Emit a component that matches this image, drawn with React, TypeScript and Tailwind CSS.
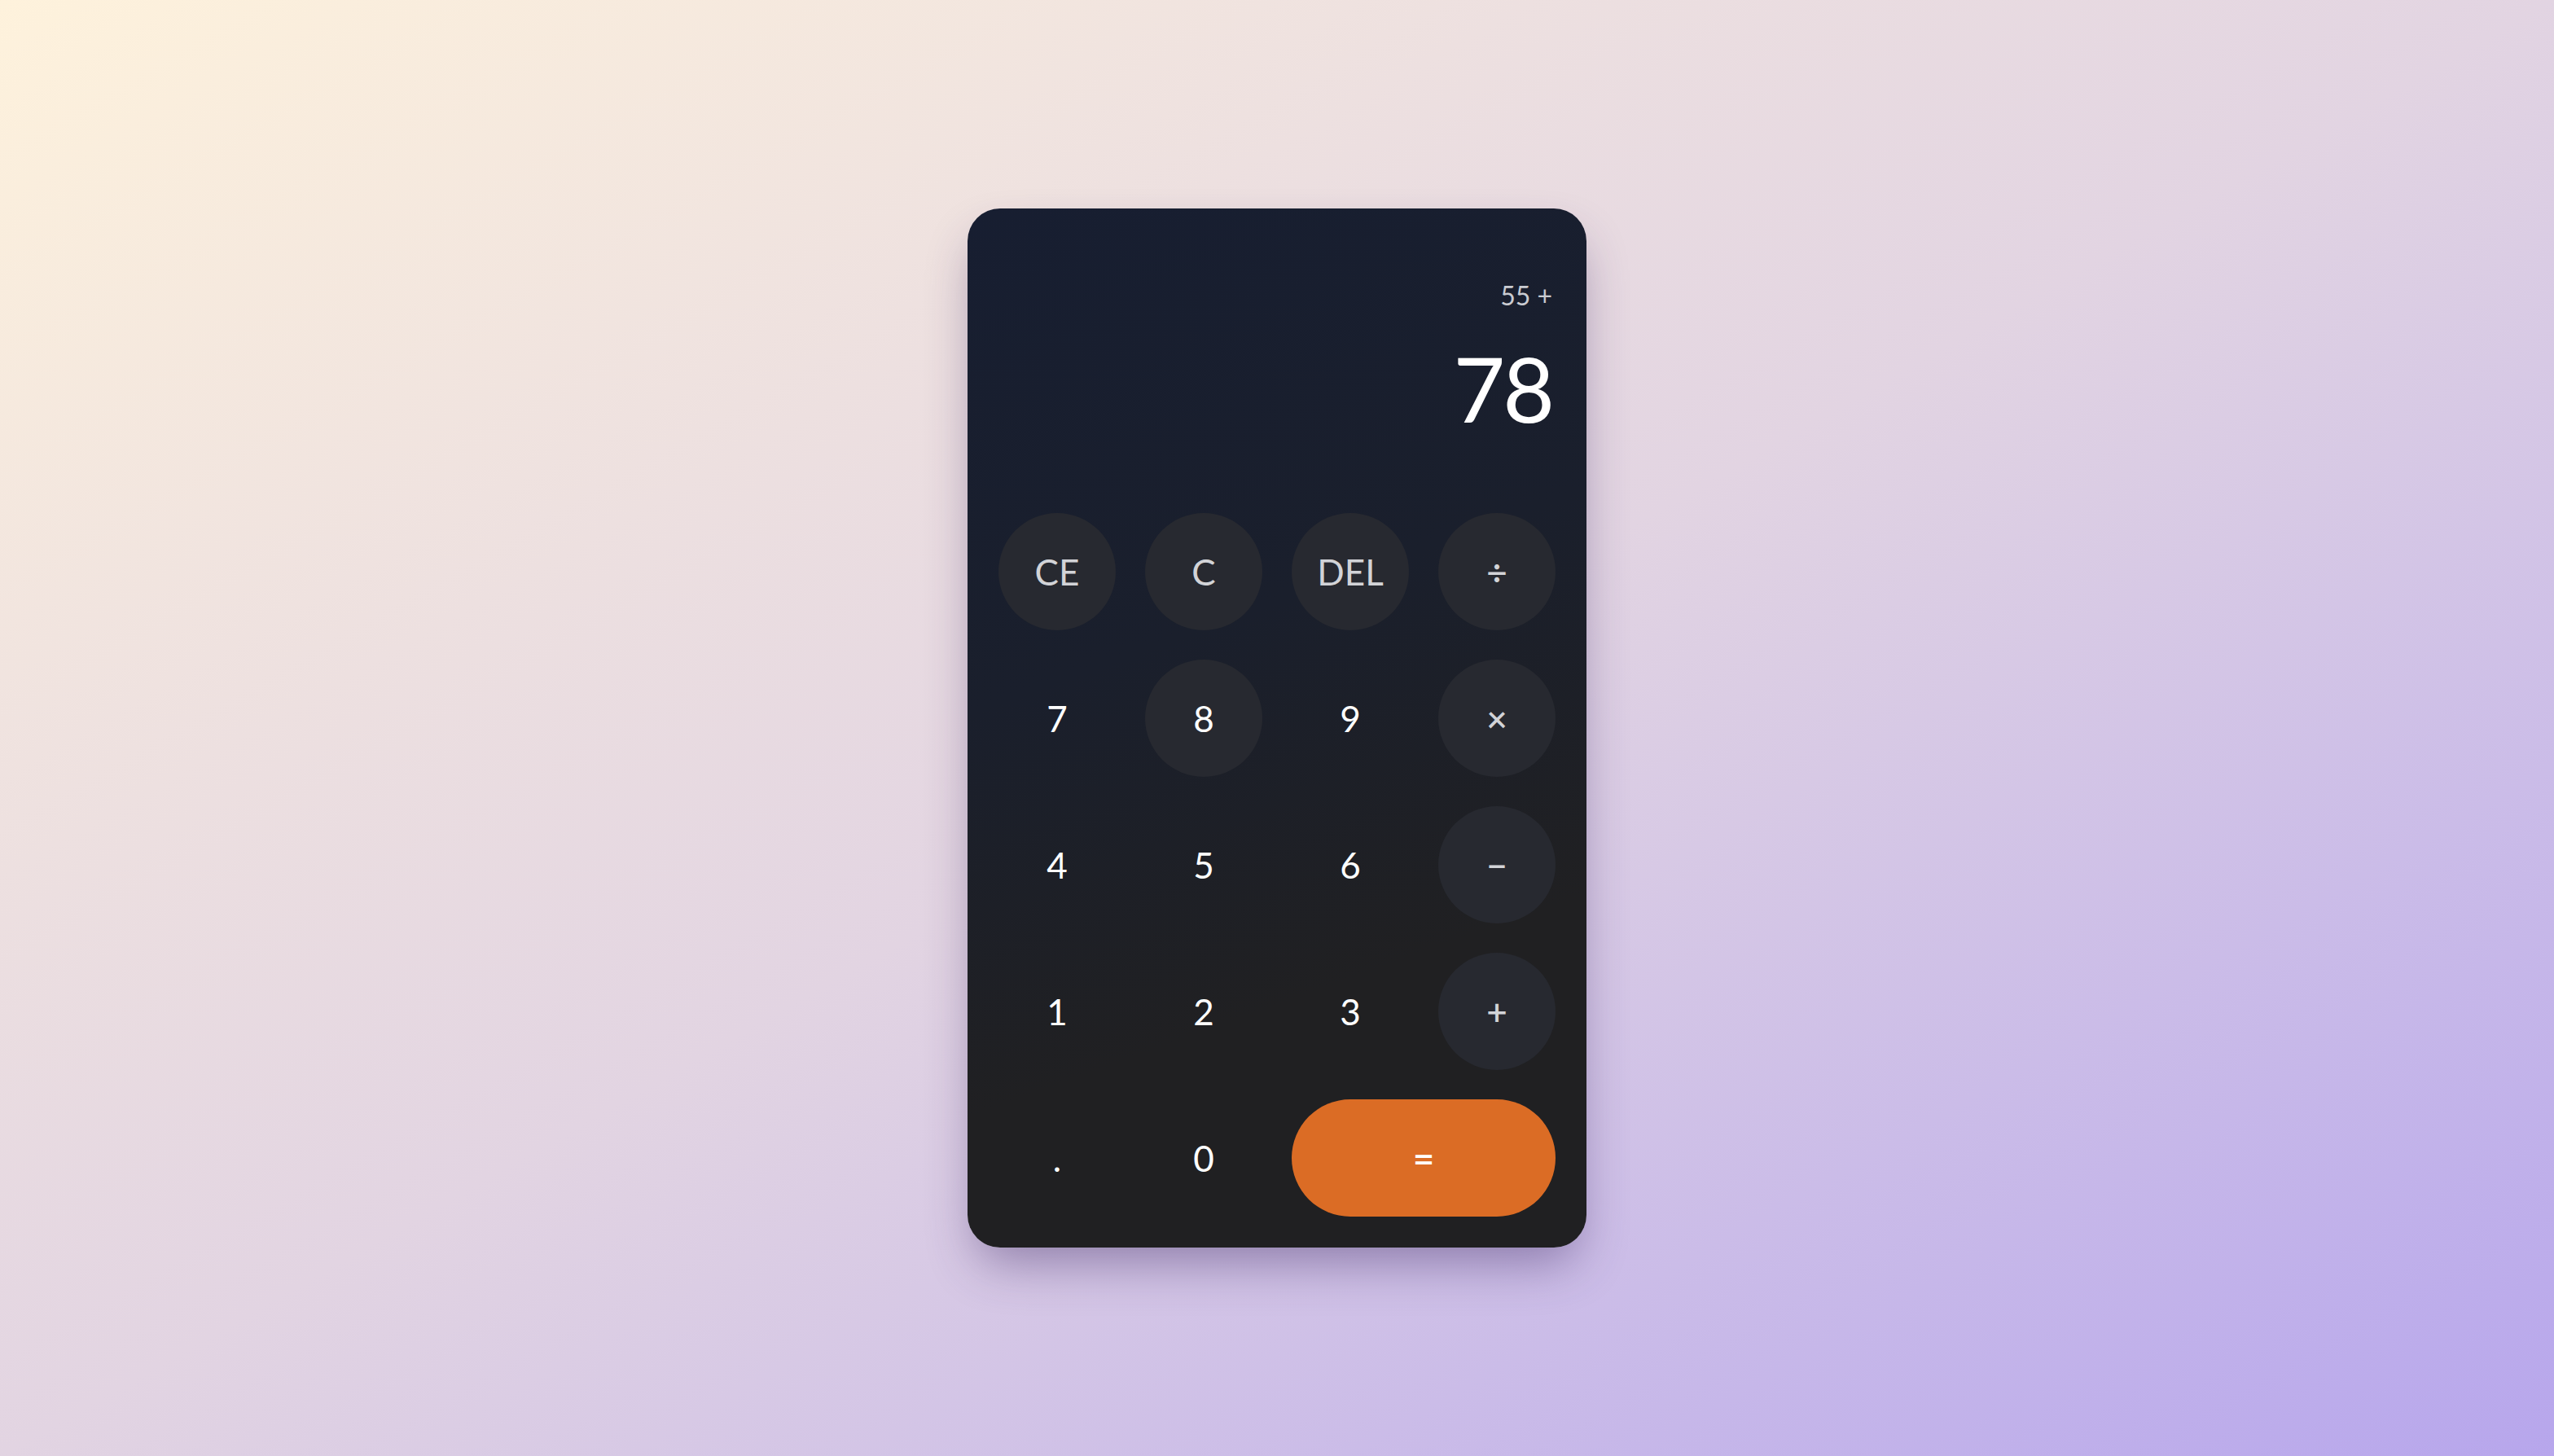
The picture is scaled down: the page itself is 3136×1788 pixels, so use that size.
import React from "react";

type Key = {
  label: string;
  kind: "fn" | "op" | "num" | "eq";
  active?: boolean;
};

const keys: Key[] = [
  { label: "CE", kind: "fn" },
  { label: "C", kind: "fn" },
  { label: "DEL", kind: "fn" },
  { label: "÷", kind: "op" },
  { label: "7", kind: "num" },
  { label: "8", kind: "num", active: true },
  { label: "9", kind: "num" },
  { label: "×", kind: "op" },
  { label: "4", kind: "num" },
  { label: "5", kind: "num" },
  { label: "6", kind: "num" },
  { label: "−", kind: "op" },
  { label: "1", kind: "num" },
  { label: "2", kind: "num" },
  { label: "3", kind: "num" },
  { label: "+", kind: "op" },
  { label: ".", kind: "num" },
  { label: "0", kind: "num" },
  { label: "=", kind: "eq" },
];

const CalcKey = ({ k }: { k: Key }) => {
  if (k.kind === "eq") {
    return (
      <button className="col-span-2 h-[144px] rounded-full bg-[#db6c25] text-[46px] font-semibold text-white flex items-center justify-center">
        {k.label}
      </button>
    );
  }

  const filled = k.kind === "fn" || k.kind === "op" || k.active;
  const tone = k.kind === "num" ? "text-white" : "text-[#d2d3d7]";
  const size = k.kind === "op" ? "text-[44px] font-semibold" : "text-[44px]";

  return (
    <button
      className={`h-[144px] w-[144px] rounded-full flex items-center justify-center ${size} ${tone} ${
        filled ? "bg-[#272930]" : "bg-transparent"
      }`}
    >
      {k.label}
    </button>
  );
};

export default function App() {
  return (
    <div
      className="min-h-screen w-full flex items-center justify-center bg-gradient-to-br from-[#fef2dc] via-[#e2d4e2] to-[#b7a6ec]"
      style={{ fontFamily: "Lato, 'Noto Sans', sans-serif" }}
    >
      <div className="w-[760px] h-[1276px] rounded-[40px] p-[38px] flex flex-col bg-[linear-gradient(160deg,#171e31_0%,#1a1f2c_40%,#202022_72%)] shadow-[0_30px_60px_-12px_rgba(60,40,100,0.45)]">
        <div className="flex flex-col items-end pr-[4px] h-[300px] mb-[36px]">
          <div className="mt-[49px] text-[32px] leading-[40px] text-[#c9cbd1]">
            55 +
          </div>
          <div className="mt-[38px] text-[110px] leading-none text-white tracking-[-3px]">
            78
          </div>
        </div>
        <div className="grid grid-cols-4 gap-[36px]">
          {keys.map((k) => (
            <CalcKey key={k.label} k={k} />
          ))}
        </div>
      </div>
    </div>
  );
}
